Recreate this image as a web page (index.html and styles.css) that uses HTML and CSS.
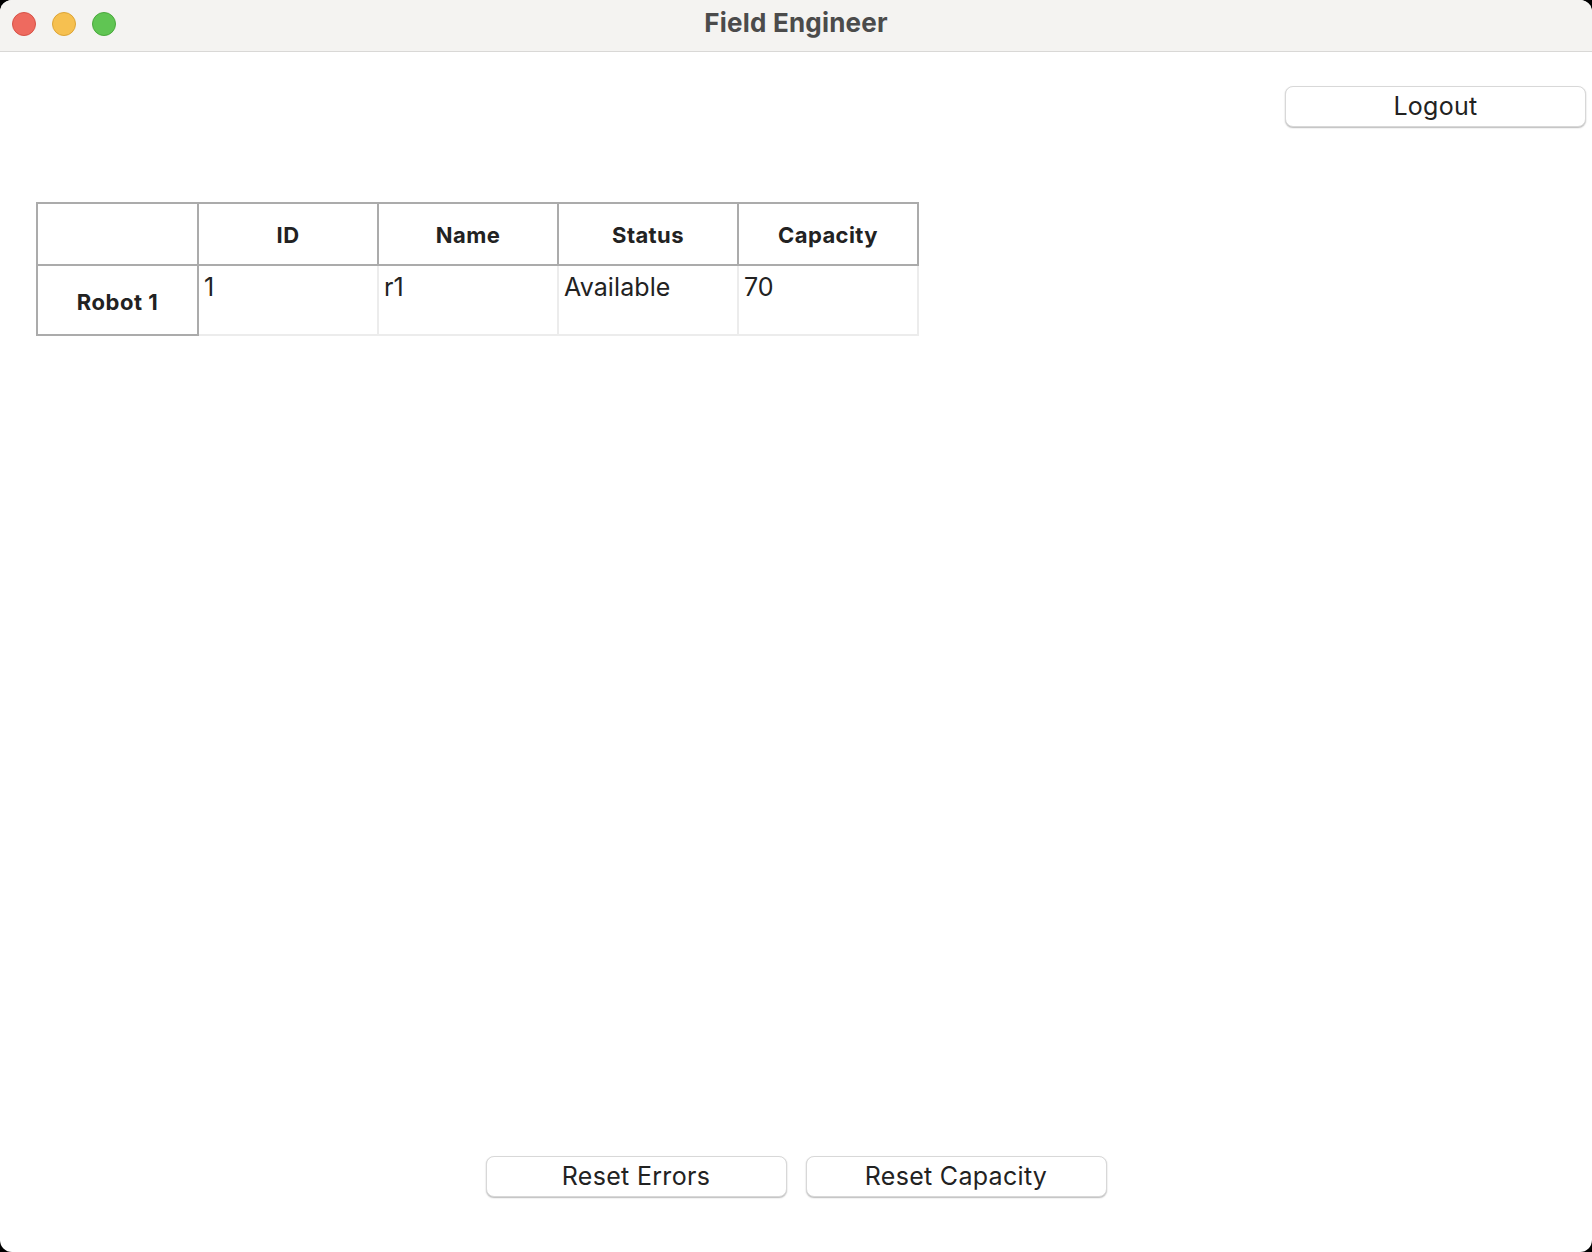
FILE: index.html
```html
<!DOCTYPE html>
<html>
<head>
<meta charset="utf-8">
<link rel="stylesheet" href="styles.css">
</head>
<body>
<div class="window">
  <div class="titlebar">
    <div class="lights">
      <span class="light red"></span>
      <span class="light yellow"></span>
      <span class="light green"></span>
    </div>
    <div class="title">Field Engineer</div>
    <div class="spacer"></div>
  </div>
  <div class="content">
    <div class="top-row">
      <button class="btn btn-logout">Logout</button>
    </div>
    <div class="grid">
      <div class="cell corner"></div>
      <div class="cell head">ID</div>
      <div class="cell head">Name</div>
      <div class="cell head">Status</div>
      <div class="cell head">Capacity</div>
      <div class="cell rowhead">Robot 1</div>
      <div class="cell data">1</div>
      <div class="cell data">r1</div>
      <div class="cell data">Available</div>
      <div class="cell data">70</div>
    </div>
    <div class="bottom-row">
      <button class="btn btn-wide">Reset Errors</button>
      <button class="btn btn-wide">Reset Capacity</button>
    </div>
  </div>
</div>
</body>
</html>
```
FILE: styles.css
```css
html, body {
  margin: 0;
  padding: 0;
  background: #000;
}
.window {
  width: 1592px;
  height: 1252px;
  background: #fff;
  border-radius: 12px;
  overflow: hidden;
  display: flex;
  flex-direction: column;
  font-family: Inter, "Noto Sans", sans-serif;
}
.titlebar {
  height: 51px;
  flex: none;
  background: #f4f3f1;
  border-bottom: 1px solid #d9d8d6;
  display: grid;
  grid-template-columns: 1fr auto 1fr;
  align-items: center;
}
.lights {
  display: flex;
  gap: 16px;
  padding-left: 12px;
  padding-bottom: 3px;
}
.light {
  width: 22px;
  height: 22px;
  border-radius: 50%;
  display: block;
}
.red { background: #ee6a5f; border: 1px solid #d65247; }
.yellow { background: #f6c050; border: 1px solid #dca437; }
.green { background: #60c553; border: 1px solid #4aa83d; }
.title {
  font-size: 26px;
  font-weight: 700;
  color: #4b4b4b;
  letter-spacing: 0.2px;
  padding-bottom: 6px;
}
.content {
  flex: 1;
  display: flex;
  flex-direction: column;
}
.top-row {
  display: flex;
  justify-content: flex-end;
  padding-right: 6px;
  margin-top: 34px;
}
.btn {
  font-family: Inter, "Noto Sans", sans-serif;
  font-size: 25px;
  letter-spacing: 0.3px;
  color: #222;
  background: #fff;
  border: 1px solid #d8d8d8;
  border-radius: 8px;
  box-shadow: 0 1px 1.5px rgba(0,0,0,0.28);
  height: 41px;
  padding: 0;
  line-height: 39px;
}
.btn-logout { width: 301px; }
.btn-wide { width: 301px; }
.grid {
  margin-top: 75px;
  margin-left: 36px;
  display: grid;
  grid-template-columns: 161px 180px 180px 180px 180px;
  grid-template-rows: 62px 70px;
  width: max-content;
  border-top: 2px solid #ababab;
  border-left: 2px solid #ababab;
}
.cell {
  box-sizing: border-box;
  color: #222;
}
.corner, .head {
  border-right: 2px solid #ababab;
  border-bottom: 2px solid #ababab;
}
.head {
  font-size: 22px;
  font-weight: 700;
  letter-spacing: 0.4px;
  display: flex;
  align-items: center;
  justify-content: center;
  padding-top: 1px;
}
.rowhead {
  font-size: 22px;
  font-weight: 700;
  letter-spacing: 0.5px;
  display: flex;
  align-items: center;
  justify-content: center;
  padding-top: 3px;
  border-right: 2px solid #ababab;
  border-bottom: 2px solid #ababab;
}
.data {
  font-size: 25px;
  letter-spacing: 0.1px;
  padding: 6px 5px;
  border-right: 2px solid #ececec;
  border-bottom: 2px solid #ececec;
}
.bottom-row {
  margin-top: auto;
  margin-bottom: 55px;
  display: flex;
  justify-content: center;
  gap: 19px;
}
```
